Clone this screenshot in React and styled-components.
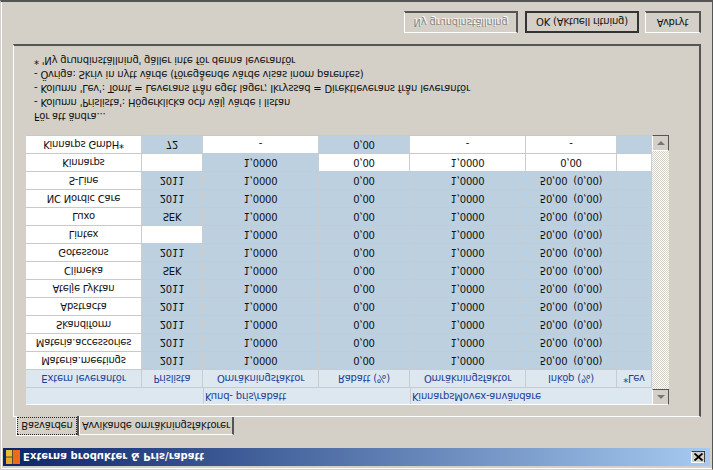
import styled, { createGlobalStyle } from 'styled-components';

const GlobalStyle = createGlobalStyle`
  html, body {
    margin: 0;
    padding: 0;
    background: #d4d0c8;
  }
`

const columns = '116px 61px 116px 91px 116px 91px 35px';

const rows = [
  { name: 'Kinnarps GmbH*', price: '72', factor: '-', rebate: '0,00', ownFactor: '-', purchase: '-', white: ['factor', 'ownFactor', 'purchase'] },
  { name: 'Kinnarps', price: '', factor: '1,0000', rebate: '0,00', ownFactor: '1,0000', purchase: '0,00', white: ['price', 'rebate', 'ownFactor', 'purchase', 'lev'] },
  { name: 'S-Line', price: '2011' },
  { name: 'NC Nordic Care', price: '2011' },
  { name: 'Luxo', price: 'SEK' },
  { name: 'Lintex', price: '', white: ['price'] },
  { name: 'Gotessons', price: '2011' },
  { name: 'Climeka', price: 'SEK' },
  { name: 'Atelje Lyktan', price: '2011' },
  { name: 'Abstracta', price: '2011' },
  { name: 'Skandiform', price: '2011' },
  { name: 'Materia.accessories', price: '2011' },
  { name: 'Materia.meetings', price: '2011' },
].reverse();

const notes = [
  'För att ändra...',
  "- Kolumn 'Prislista': Högerklicka och välj värde i listan",
  "- Kolumn 'Lev': Tomt = Leverans från eget lager; Ikryssad = Direktleverans från leverantör",
  '- Övriga: Skriv in nytt värde (föregående värde visas inom parentes)',
  "* 'Ny grundinställning' gäller inte för denna leverantör",
];

function App() {
  return (
    <>
      <GlobalStyle />
      <Page>
        <TitleBar>
          <AppIcon viewBox="0 0 14 14">
            <rect x="0" y="0" width="14" height="14" fill="#5a4a30" />
            <rect x="0" y="0" width="6" height="6.5" fill="#e8a828" />
            <rect x="0" y="7.5" width="6" height="6.5" fill="#e8c030" />
            <rect x="7" y="0" width="7" height="14" fill="#ec6a18" />
          </AppIcon>
          <TitleText>Externa produkter &amp; Pris\rabatt</TitleText>
          <CloseButton>
            <svg width="9" height="8" viewBox="0 0 9 8">
              <path d="M0.5 0.5 L8.5 7.5 M8.5 0.5 L0.5 7.5" stroke="#000" strokeWidth="1.8" />
            </svg>
          </CloseButton>
        </TitleBar>
        <Content>
          <Tabs>
            <Tab $active $width={63}><TabFocus>Basvärden</TabFocus></Tab>
            <Tab $width={155}>Avvikande omräkningsfaktorer</Tab>
          </Tabs>
          <Panel>
            <GridWrap>
              <Grid>
                <GroupRow>
                  <GroupCell $span={2} />
                  <GroupCell $span={2}>Kund- pris/rabatt</GroupCell>
                  <GroupCell $span={3}>KinnarpsMovex-användare</GroupCell>
                </GroupRow>
                <Row>
                  <HeadCell>Extern leverantör</HeadCell>
                  <HeadCell>Prislista</HeadCell>
                  <HeadCell>Omräkningsfaktor</HeadCell>
                  <HeadCell>Rabatt (%)</HeadCell>
                  <HeadCell>Omräkningsfaktor</HeadCell>
                  <HeadCell>Inköp (%)</HeadCell>
                  <HeadCell>*Lev</HeadCell>
                </Row>
                {rows.map((row) => {
                  const white = row.white || [];
                  return (
                    <Row key={row.name}>
                      <Cell $white>{row.name}</Cell>
                      <Cell $white={white.includes('price')}>{row.price}</Cell>
                      <Cell $white={white.includes('factor')}>{row.factor || '1,0000'}</Cell>
                      <Cell $white={white.includes('rebate')}>{row.rebate || '0,00'}</Cell>
                      <Cell $white={white.includes('ownFactor')}>{row.ownFactor || '1,0000'}</Cell>
                      <Cell $white={white.includes('purchase')}>{row.purchase || '50,00  (0,00)'}</Cell>
                      <Cell $white={white.includes('lev')} />
                    </Row>
                  );
                })}
              </Grid>
              <ScrollBar>
                <ScrollButton><UpArrow /></ScrollButton>
                <ScrollButton><DownArrow /></ScrollButton>
              </ScrollBar>
            </GridWrap>
            <Notes>
              {notes.map((note) => <Note key={note}>{note}</Note>)}
            </Notes>
          </Panel>
          <Buttons>
            <Button $width={114} disabled>Ny grundinställning</Button>
            <Button $width={114} $default>OK (Aktuell ritning)</Button>
            <Button $width={56}>Avbryt</Button>
          </Buttons>
        </Content>
      </Page>
    </>
  )
}

const Page = styled.div`
  width: 713px;
  height: 470px;
  box-sizing: border-box;
  padding: 3px 2px 0 2px;
  background: #d4d0c8;
  border-left: 1px solid #d4d0c8;
  border-top: 1px solid #d4d0c8;
  border-bottom: 2px solid #555;
  border-right: 1px solid #555;
  box-shadow: inset 1px 1px 0 #fff;
  transform: scaleY(-1);
  overflow: hidden;
  display: flex;
  flex-direction: column;
  font-family: "DejaVu Sans", sans-serif;
  font-size: 10px;
  letter-spacing: -0.19px;
  color: #111;
`

const TitleBar = styled.div`
  height: 18px;
  flex: none;
  display: flex;
  align-items: center;
  padding: 0 4px 0 3px;
  background: linear-gradient(to right, #0a246a, #a6caf0);
`

const AppIcon = styled.svg`
  width: 14px;
  height: 14px;
  flex: none;
  margin-right: 3px;
`

const TitleText = styled.div`
  color: #fff;
  font-weight: 700;
  font-size: 10px;
  letter-spacing: 0.05px;
  flex: 1;
`

const CloseButton = styled.div`
  width: 14px;
  height: 12px;
  margin-right: 1px;
  box-sizing: border-box;
  background: #d4d0c8;
  border: 1px solid;
  border-color: #fff #404040 #404040 #fff;
  display: flex;
  align-items: center;
  justify-content: center;
`

const Content = styled.div`
  flex: 1;
  display: flex;
  flex-direction: column;
  padding: 12px 9px 0 10px;
`

const Tabs = styled.div`
  display: flex;
  align-items: flex-end;
  height: 19px;
  padding-left: 3px;
  flex: none;
`

const Tab = styled.div`
  box-sizing: border-box;
  width: ${(p) => p.$width}px;
  height: ${(p) => (p.$active ? '20px' : '18px')};
  margin-bottom: ${(p) => (p.$active ? '-1px' : '0')};
  padding: ${(p) => (p.$active ? '0 0 1px 0' : '0')};
  display: flex;
  align-items: center;
  justify-content: center;
  background: #d4d0c8;
  border-left: 1px solid #fff;
  border-top: 1px solid #fff;
  border-right: 2px solid #555;
  position: relative;
`

const TabFocus = styled.span`
  flex: 1;
  align-self: stretch;
  display: flex;
  align-items: center;
  justify-content: center;
  border: 1px dotted #222;
`

const Panel = styled.div`
  flex: none;
  height: 373px;
  box-sizing: border-box;
  border-left: 1px solid #fff;
  border-top: 1px solid #fff;
  border-right: 2px solid #555;
  border-bottom: 2px solid #555;
  padding: 11px 0 0 12px;
`

const GridWrap = styled.div`
  display: flex;
  height: 270px;
  width: 643px;
`

const Grid = styled.div`
  width: 626px;
  background: #bcd0e0;
`

const Row = styled.div`
  display: grid;
  grid-template-columns: ${columns};
  height: 18px;
`

const GroupRow = styled(Row)`
  border-top: 1px solid #fff;
  box-sizing: border-box;
`

const GroupCell = styled.div`
  grid-column: span ${(p) => p.$span};
  background: #dde7f0;
  border-left: 1px solid #c8ccd0;
  border-bottom: 1px solid #c8ccd0;
  color: #1c3f94;
  padding-left: 1px;
  line-height: 15px;
  white-space: nowrap;
  &:first-child {
    border-left: none;
  }
`

const HeadCell = styled.div`
  background: #dde7f0;
  border-right: 1px solid #c8ccd0;
  border-bottom: 1px solid #c8ccd0;
  color: #1c3f94;
  text-align: center;
  line-height: 17px;
  white-space: nowrap;
`

const Cell = styled.div`
  background: ${(p) => (p.$white ? '#fff' : '#bcd0e0')};
  border-right: 1px solid #c9cdd0;
  border-bottom: 1px solid ${(p) => (p.$white ? '#c9c9c9' : '#bdcdd9')};
  color: #111;
  text-align: center;
  line-height: 17px;
  white-space: pre;
  overflow: hidden;
`

const ScrollBar = styled.div`
  width: 17px;
  flex: none;
  display: flex;
  flex-direction: column;
  justify-content: space-between;
  background: repeating-conic-gradient(#fff 0 25%, #d4d0c8 0 50%) 0 0 / 2px 2px;
`

const ScrollButton = styled.div`
  height: 16px;
  box-sizing: border-box;
  background: #d4d0c8;
  border: 1px solid;
  border-color: #fff #555 #555 #fff;
  display: flex;
  align-items: center;
  justify-content: center;
`

const UpArrow = styled.div`
  width: 0;
  height: 0;
  border-left: 4px solid transparent;
  border-right: 4px solid transparent;
  border-bottom: 4px solid #777;
`

const DownArrow = styled.div`
  width: 0;
  height: 0;
  border-left: 4px solid transparent;
  border-right: 4px solid transparent;
  border-top: 4px solid #777;
`

const Notes = styled.div`
  padding: 12px 0 0 8px;
`

const Note = styled.div`
  line-height: 14px;
  white-space: nowrap;
`

const Buttons = styled.div`
  flex: none;
  display: flex;
  justify-content: flex-end;
  gap: 6px;
  padding: 11px 0 0 0;
`

const Button = styled.button`
  width: ${(p) => p.$width}px;
  height: 22px;
  padding: 0;
  box-sizing: border-box;
  background: #d4d0c8;
  font: inherit;
  letter-spacing: inherit;
  color: ${(p) => (p.disabled ? '#888' : '#111')};
  text-shadow: ${(p) => (p.disabled ? '1px 1px 0 #fff' : 'none')};
  border-style: solid;
  border-width: ${(p) => (p.$default ? '2px' : '1px 2px 2px 1px')};
  border-color: ${(p) => (p.$default ? '#333' : '#fff #555 #555 #fff')};
  &:first-child {
    margin-right: 1px;
  }
`

export default App;
